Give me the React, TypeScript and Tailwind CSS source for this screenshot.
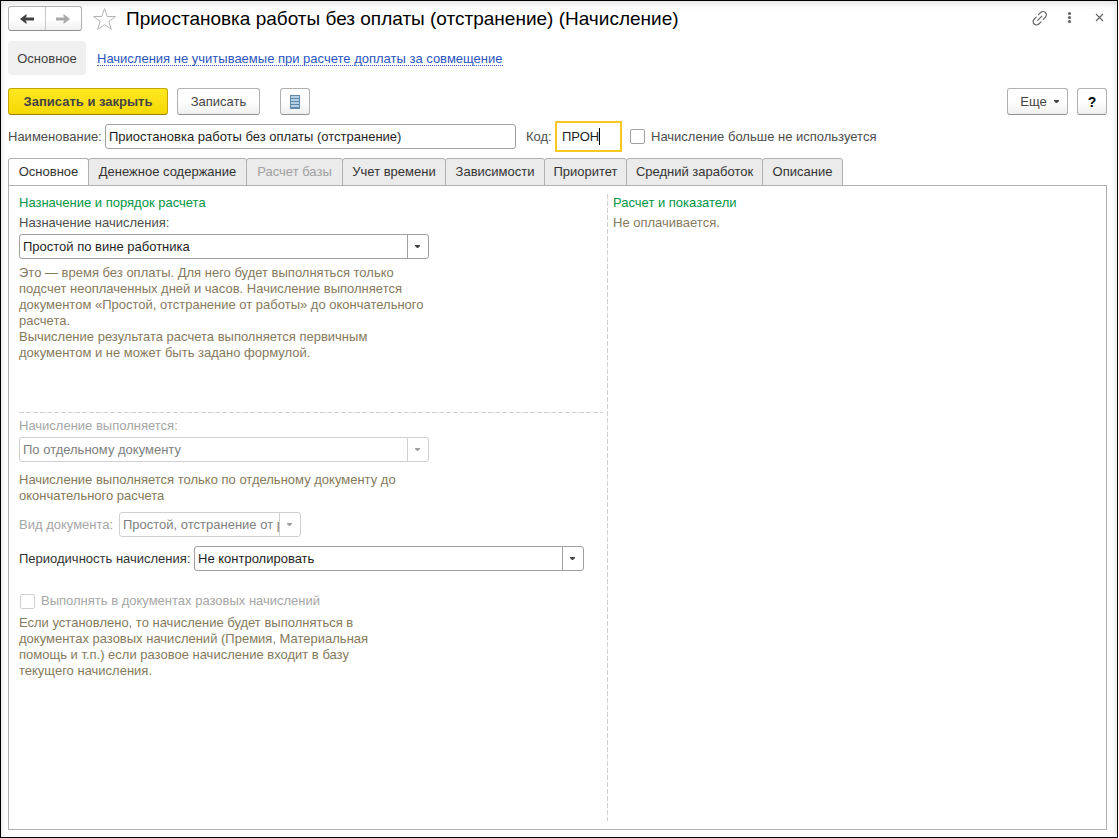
import { useId, useState } from "react";
import type { ReactNode } from "react";

const tabs = [
  { title: "Основное", width: "w-[81px]" },
  { title: "Денежное содержание", width: "w-[159px]" },
  { title: "Расчет базы", width: "w-[97px]", disabled: true },
  { title: "Учет времени", width: "w-[104px]" },
  { title: "Зависимости", width: "w-[100px]" },
  { title: "Приоритет", width: "w-[83px]" },
  { title: "Средний заработок", width: "w-[137px]" },
  { title: "Описание", width: "w-[81px]" },
];

const raised =
  "flex items-center justify-center rounded-[3px] border border-[#b0b0b0] border-b-[#8f8f8f] bg-linear-to-b from-white from-50% to-[#f0f0f0] text-[#444444]";

function Arrow({ flip = false, className }: { flip?: boolean; className: string }) {
  return (
    <svg viewBox="0 0 14 10" className={className} aria-hidden="true">
      <path
        d={flip ? "M7.500 0 14 5 7.500 10V7.500L8.800 6.500H0V3.500H8.800L7.500 2.500Z" : "M6.500 0 0 5 6.500 10V7.500L5.200 6.500H14V3.500H5.200L6.500 2.500Z"}
        fill="currentColor"
      />
    </svg>
  );
}

function Caret({ className }: { className?: string }) {
  return (
    <svg viewBox="0 0 5 3" className={`h-[3px] w-[5px] ${className ?? ""}`} aria-hidden="true">
      <path d="M0 0H5V1L3 3H2L0 1Z" fill="currentColor" />
    </svg>
  );
}

function Select({ id, value, className, disabled = false }: { id: string; value: string; className: string; disabled?: boolean }) {
  return (
    <div className={`relative ${className}`}>
      <select
        id={id}
        disabled={disabled}
        className="block h-[25px] w-full appearance-none rounded-[3px] border border-[#a0a0a0] bg-white pr-[21px] pl-[3px] text-[#1f1f1f] opacity-100 outline-none disabled:border-[#d0d0d0] disabled:text-[#808080]"
      >
        <option>{value}</option>
      </select>
      <span
        className={`pointer-events-none absolute inset-y-px right-px flex w-[21px] items-center justify-center border-l pr-[2px] ${
          disabled ? "border-[#d0d0d0] text-[#a0a0a0]" : "border-[#a0a0a0] text-[#444444]"
        }`}
      >
        <Caret />
      </span>
    </div>
  );
}

function Check({ children, disabled = false }: { children: ReactNode; disabled?: boolean }) {
  return (
    <label className={`flex items-center gap-[6px] ${disabled ? "text-[#a6a6a6]" : "text-[#4d4d4d]"}`}>
      <input
        type="checkbox"
        disabled={disabled}
        className="size-[15px] shrink-0 appearance-none rounded-[2px] border border-[#a0a0a0] bg-white checked:bg-[#ffe000] disabled:border-[#d0d0d0]"
      />
      {children}
    </label>
  );
}

export default function App() {
  const id = useId();
  const [active, setActive] = useState(0);
  const [name, setName] = useState("Приостановка работы без оплаты (отстранение)");
  const [code, setCode] = useState("ПРОН");

  return (
    <div className="min-h-screen bg-white pr-px font-['Liberation_Sans',Arial,sans-serif] text-[13px] leading-4 text-[#4d4d4d]">
      <div className="flex min-h-screen flex-col border border-black bg-white pr-[10px] pb-[7px] pl-[7px] shadow-[inset_0_6px_6px_-3px_#e4e4e4,inset_4px_0_4px_-2px_#ececec,inset_-4px_0_4px_-2px_#ececec]">
        <header className="flex items-center pt-[5px]">
          <div className="flex h-[25px] w-[74px] rounded-[3px] border border-[#b0b0b0] border-b-[#8f8f8f] bg-linear-to-b from-white from-50% to-[#f0f0f0]">
            <button type="button" aria-label="Назад" className="flex flex-1 items-center justify-center border-r border-[#c8c8c8] text-[#404040]">
              <Arrow className="h-[10px] w-[14px]" />
            </button>
            <button type="button" aria-label="Вперед" className="flex flex-1 items-center justify-center text-[#a8a8a8]">
              <Arrow flip className="h-[10px] w-[14px]" />
            </button>
          </div>
          <button type="button" aria-label="В избранное" className="ml-[10px]">
            <svg viewBox="0 0 24 24" className="size-6" fill="none" stroke="#b4b4b4" aria-hidden="true">
              <path d="M12.500 1.500 15.200 9.500H23.500L16.800 14.500 19.400 22.500 12.500 17.500 5.600 22.500 8.200 14.500 1.500 9.500H9.800Z" />
            </svg>
          </button>
          <h1 className="ml-[10px] flex-1 text-[19px] leading-6 text-black">
            Приостановка работы без оплаты (отстранение) (Начисление)
          </h1>
          <div className="-mr-px flex items-center gap-[14px] text-[#666666]">
            <button type="button" aria-label="Получить ссылку">
              <svg viewBox="0 0 16 16" className="size-4" fill="none" stroke="currentColor" strokeWidth="1.200" strokeLinecap="round" aria-hidden="true">
                <path d="M6.500 3.700 8.700 1.500a3.300 3.300 0 0 1 4.700 0 3.300 3.300 0 0 1 0 4.700L11.200 8.400M9 10.800 6.800 13a3.300 3.300 0 0 1-4.700 0 3.300 3.300 0 0 1 0-4.700L4.300 6.100M5.700 9.300 9.800 5.200" />
              </svg>
            </button>
            <button type="button" aria-label="Дополнительно" className="w-4">
              <svg viewBox="0 0 16 16" className="size-4" fill="currentColor" aria-hidden="true">
                <circle cx="7.500" cy="2.500" r="1.600" />
                <circle cx="7.500" cy="6.500" r="1.600" />
                <circle cx="7.500" cy="10.500" r="1.600" />
              </svg>
            </button>
            <button type="button" aria-label="Закрыть">
              <svg viewBox="0 0 16 16" className="size-4" stroke="currentColor" strokeWidth="1.200" aria-hidden="true">
                <path d="M4 3 11 10M11 3 4 10" />
              </svg>
            </button>
          </div>
        </header>

        <nav className="mt-[10px] flex items-center gap-[11px]">
          <a href="#main" className="flex h-[34px] w-[78px] items-center justify-center rounded-[4px] bg-[#f0f0f0] pt-px text-[#404040]">
            Основное
          </a>
          <a href="#excluded" className="border-b border-dotted border-[#3a62c0] pt-px leading-[13px] text-[#2a55c0]">
            Начисления не учитываемые при расчете доплаты за совмещение
          </a>
        </nav>

        <div className="mt-[13px] flex h-[27px] items-stretch">
          <button
            type="button"
            className="w-[160px] rounded-[3px] border border-[#c4a600] border-b-[#967f00] bg-linear-to-b from-[#ffe81f] to-[#f5d800] font-bold text-[#444444]"
          >
            Записать и закрыть
          </button>
          <button type="button" className={`${raised} ml-[9px] w-[83px]`}>
            Записать
          </button>
          <button type="button" aria-label="Список" className={`${raised} ml-5 w-[30px]`}>
            <svg viewBox="0 0 10 14" className="h-[14px] w-[10px]" aria-hidden="true">
              <path d="M0 0H10V14H0Z" fill="#5f8bab" />
              <path d="M1 1H9V3H1ZM1 4H9V6H1ZM1 7H9V9H1ZM1 10H9V12H1Z" fill="#b5d0e4" />
            </svg>
          </button>
          <button type="button" className={`${raised} ml-auto w-[61px] gap-[7px] pl-1`}>
            Еще
            <Caret />
          </button>
          <button type="button" className={`${raised} ml-[9px] w-[30px] text-[14px] font-bold text-black`}>
            ?
          </button>
        </div>

        <div className="mt-[6px] flex h-[31px] items-center">
          <label htmlFor={`${id}-name`} className="w-[97px] whitespace-nowrap">
            Наименование:
          </label>
          <input
            id={`${id}-name`}
            value={name}
            onChange={(e) => setName(e.target.value)}
            className="h-[25px] w-[411px] rounded-[3px] border border-[#a0a0a0] bg-white px-[3px] text-[#1f1f1f] outline-none"
          />
          <label htmlFor={`${id}-code`} className="ml-[10px] w-[29px]">
            Код:
          </label>
          <div className="relative">
            <input
              id={`${id}-code`}
              value={code}
              onChange={(e) => setCode(e.target.value)}
              className="block h-[31px] w-[67px] border-2 border-[#f9c81e] bg-white px-[5px] text-[#1f1f1f] outline-none"
            />
            <span className="pointer-events-none absolute inset-y-[7px] left-[44px] w-px bg-black" />
          </div>
          <div className="ml-2">
            <Check>Начисление больше не используется</Check>
          </div>
        </div>

        <div role="tablist" className="mt-[6px] flex">
          {tabs.map((tab, i) => (
            <button
              key={tab.title}
              type="button"
              role="tab"
              aria-selected={i === active}
              disabled={tab.disabled}
              onClick={() => setActive(i)}
              className={`h-[28px] rounded-t-[3px] border border-[#b0b0b0] whitespace-nowrap not-first:-ml-px ${tab.width} ${
                i === active ? "border-b-white bg-white" : "bg-[#ebebeb]"
              } ${tab.disabled ? "text-[#a0a0a0]" : "text-[#333333]"}`}
            >
              {tab.title}
            </button>
          ))}
        </div>

        <main className="-mt-px grid flex-1 grid-cols-[588fr_1px_498fr] border border-[#b0b0b0] pt-2 pb-2 pl-[10px]">
          <section className="min-w-0 pr-1">
            <h2 className="leading-[18px] text-[#009646]">Назначение и порядок расчета</h2>
            <label htmlFor={`${id}-purpose`} className="mt-[2px] block leading-[18px]">
              Назначение начисления:
            </label>
            <Select id={`${id}-purpose`} value="Простой по вине работника" className="mt-[2px] w-[410px]" />
            <div className="mt-[6px] h-[147px] w-[410px] text-[#857a5c]">
              <p>
                Это — время без оплаты. Для него будет выполняться только подсчет неоплаченных дней и часов. Начисление выполняется
                документом «Простой, отстранение от работы» до окончательного расчета.
              </p>
              <p className="w-[380px]">Вычисление результата расчета выполняется первичным документом и не может быть задано формулой.</p>
            </div>
            <div className="h-px bg-[repeating-linear-gradient(to_right,#d0d0d0_0_5px,transparent_5px_7px)]" />
            <label htmlFor={`${id}-mode`} className="mt-[4px] block leading-[18px] text-[#a6a6a6]">
              Начисление выполняется:
            </label>
            <Select id={`${id}-mode`} value="По отдельному документу" disabled className="mt-[2px] w-[410px]" />
            <p className="mt-[10px] w-[400px] text-[#857a5c]">
              Начисление выполняется только по отдельному документу до окончательного расчета
            </p>
            <div className="mt-2 flex items-center text-[#a6a6a6]">
              <label htmlFor={`${id}-kind`} className="w-[100px] whitespace-nowrap">
                Вид документа:
              </label>
              <Select id={`${id}-kind`} value="Простой, отстранение от работы" disabled className="w-[182px]" />
            </div>
            <div className="mt-[9px] flex items-center text-[#333333]">
              <label htmlFor={`${id}-period`} className="w-[175px] whitespace-nowrap">
                Периодичность начисления:
              </label>
              <Select id={`${id}-period`} value="Не контролировать" className="w-[390px]" />
            </div>
            <div className="mt-[22px] pl-px">
              <Check disabled>Выполнять в документах разовых начислений</Check>
            </div>
            <p className="mt-[6px] w-[370px] text-[#857a5c]">
              Если установлено, то начисление будет выполняться в документах разовых начислений (Премия, Материальная помощь и т.п.)
              если разовое начисление входит в базу текущего начисления.
            </p>
          </section>
          <div className="w-px bg-[repeating-linear-gradient(to_bottom,#d0d0d0_0_5px,transparent_5px_7px)]" />
          <section className="min-w-0 pl-[5px]">
            <h2 className="leading-[18px] text-[#009646]">Расчет и показатели</h2>
            <p className="mt-[2px] leading-[18px] text-[#857a5c]">Не оплачивается.</p>
          </section>
        </main>
      </div>
    </div>
  );
}
